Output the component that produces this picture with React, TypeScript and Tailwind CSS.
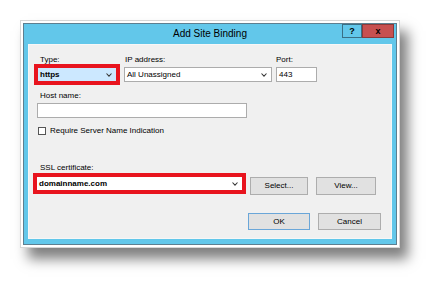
function Chevron() {
  return (
    <svg width="6" height="4" viewBox="0 0 6 4" className="shrink-0">
      <path d="M0.5 0.5 L3 3.2 L5.5 0.5" fill="none" stroke="#3a3a3a" strokeWidth="1.1" />
    </svg>
  );
}

export default function App() {
  return (
    <div className="h-[291px] w-[442px] overflow-hidden bg-white pl-[20px] pt-[20px] font-['Liberation_Sans',Arial,sans-serif] text-black">
      {/* white frame + drop shadow */}
      <div className="w-[380px] border border-[#d6d6d6] bg-white p-[2px] shadow-[8px_11px_12px_rgba(0,0,0,0.5)]">
        <div className="flex h-[222px] w-[374px] flex-col border border-[#5d7f90] bg-[#62c7ea] pb-[5px] pl-[4px] pr-[4px]">
          {/* title bar */}
          <div className="-ml-[4px] -mr-[4px] grid h-[20px] grid-cols-[1fr_auto_1fr]">
            <div />
            <div className="pt-[3px] text-[10px] leading-[14px]">Add Site Binding</div>
            <div className="flex justify-end pr-[2px]">
              <div className="flex h-[14px] w-[20px] items-center justify-center border border-[#3a6f85] bg-[#62c7ea] text-[9px] font-bold leading-none">
                ?
              </div>
              <div className="flex h-[14px] w-[32px] items-center justify-center border border-[#8a3a3a] bg-[#c75050] text-[9px] font-bold leading-none">
                x
              </div>
            </div>
          </div>

          {/* content */}
          <div className="flex h-[195px] flex-col border border-[#f7f7f7] bg-[#f0f0f0] pl-[8px] pt-[10px] text-[8px] leading-[10px]">
            <div className="flex">
              <div className="flex w-[80px] flex-col gap-[2px]">
                <span className="pl-[3px]">Type:</span>
                <div className="flex h-[15px] items-center justify-between border border-[#7eb4ea] bg-[#cce8ff] pl-[2px] pr-[4px] font-bold outline-4 outline-offset-[-1px] outline-[#e8141e]">
                  https
                  <Chevron />
                </div>
              </div>
              <div className="ml-[7px] flex w-[148px] flex-col gap-[2px]">
                <span className="pl-[1px]">IP address:</span>
                <div className="flex h-[15px] items-center justify-between border border-[#acacac] bg-white pl-[2px] pr-[4px]">
                  All Unassigned
                  <Chevron />
                </div>
              </div>
              <div className="ml-[4px] flex w-[41px] flex-col gap-[2px]">
                <span>Port:</span>
                <div className="flex h-[15px] items-center border border-[#acacac] bg-white pl-[2px]">443</div>
              </div>
            </div>

            <span className="mt-[9px] pl-[3px]">Host name:</span>
            <div className="mt-[2px] h-[15px] w-[210px] border border-[#acacac] bg-white" />

            <div className="mt-[8px] flex items-center gap-[4px] pl-[1px]">
              <span className="h-[8px] w-[8px] border border-[#555] bg-white" />
              Require Server Name Indication
            </div>

            <span className="mt-[27px] pl-[3px]">SSL certificate:</span>
            <div className="mt-[3px] flex items-start">
              <div className="-ml-[1px] flex h-[15px] w-[207px] items-center justify-between border border-[#acacac] bg-white pl-[2px] pr-[4px] font-bold outline-4 outline-offset-[-1px] outline-[#e8141e]">
                domainname.com
                <Chevron />
              </div>
              <button className="ml-[7px] mt-[1px] h-[18px] w-[58px] border border-[#adadad] bg-[#e1e1e1] text-[8px]">
                Select...
              </button>
              <button className="ml-[8px] mt-[1px] h-[18px] w-[60px] border border-[#adadad] bg-[#e1e1e1] text-[8px]">
                View...
              </button>
            </div>

            <div className="mb-[8px] mt-auto flex justify-end gap-[8px] pr-[10px]">
              <button className="h-[17px] w-[62px] border border-[#6aa6d8] bg-[#e1e1e1] text-[8px]">OK</button>
              <button className="h-[17px] w-[63px] border border-[#adadad] bg-[#e1e1e1] text-[8px]">Cancel</button>
            </div>
          </div>
        </div>
      </div>
    </div>
  );
}
